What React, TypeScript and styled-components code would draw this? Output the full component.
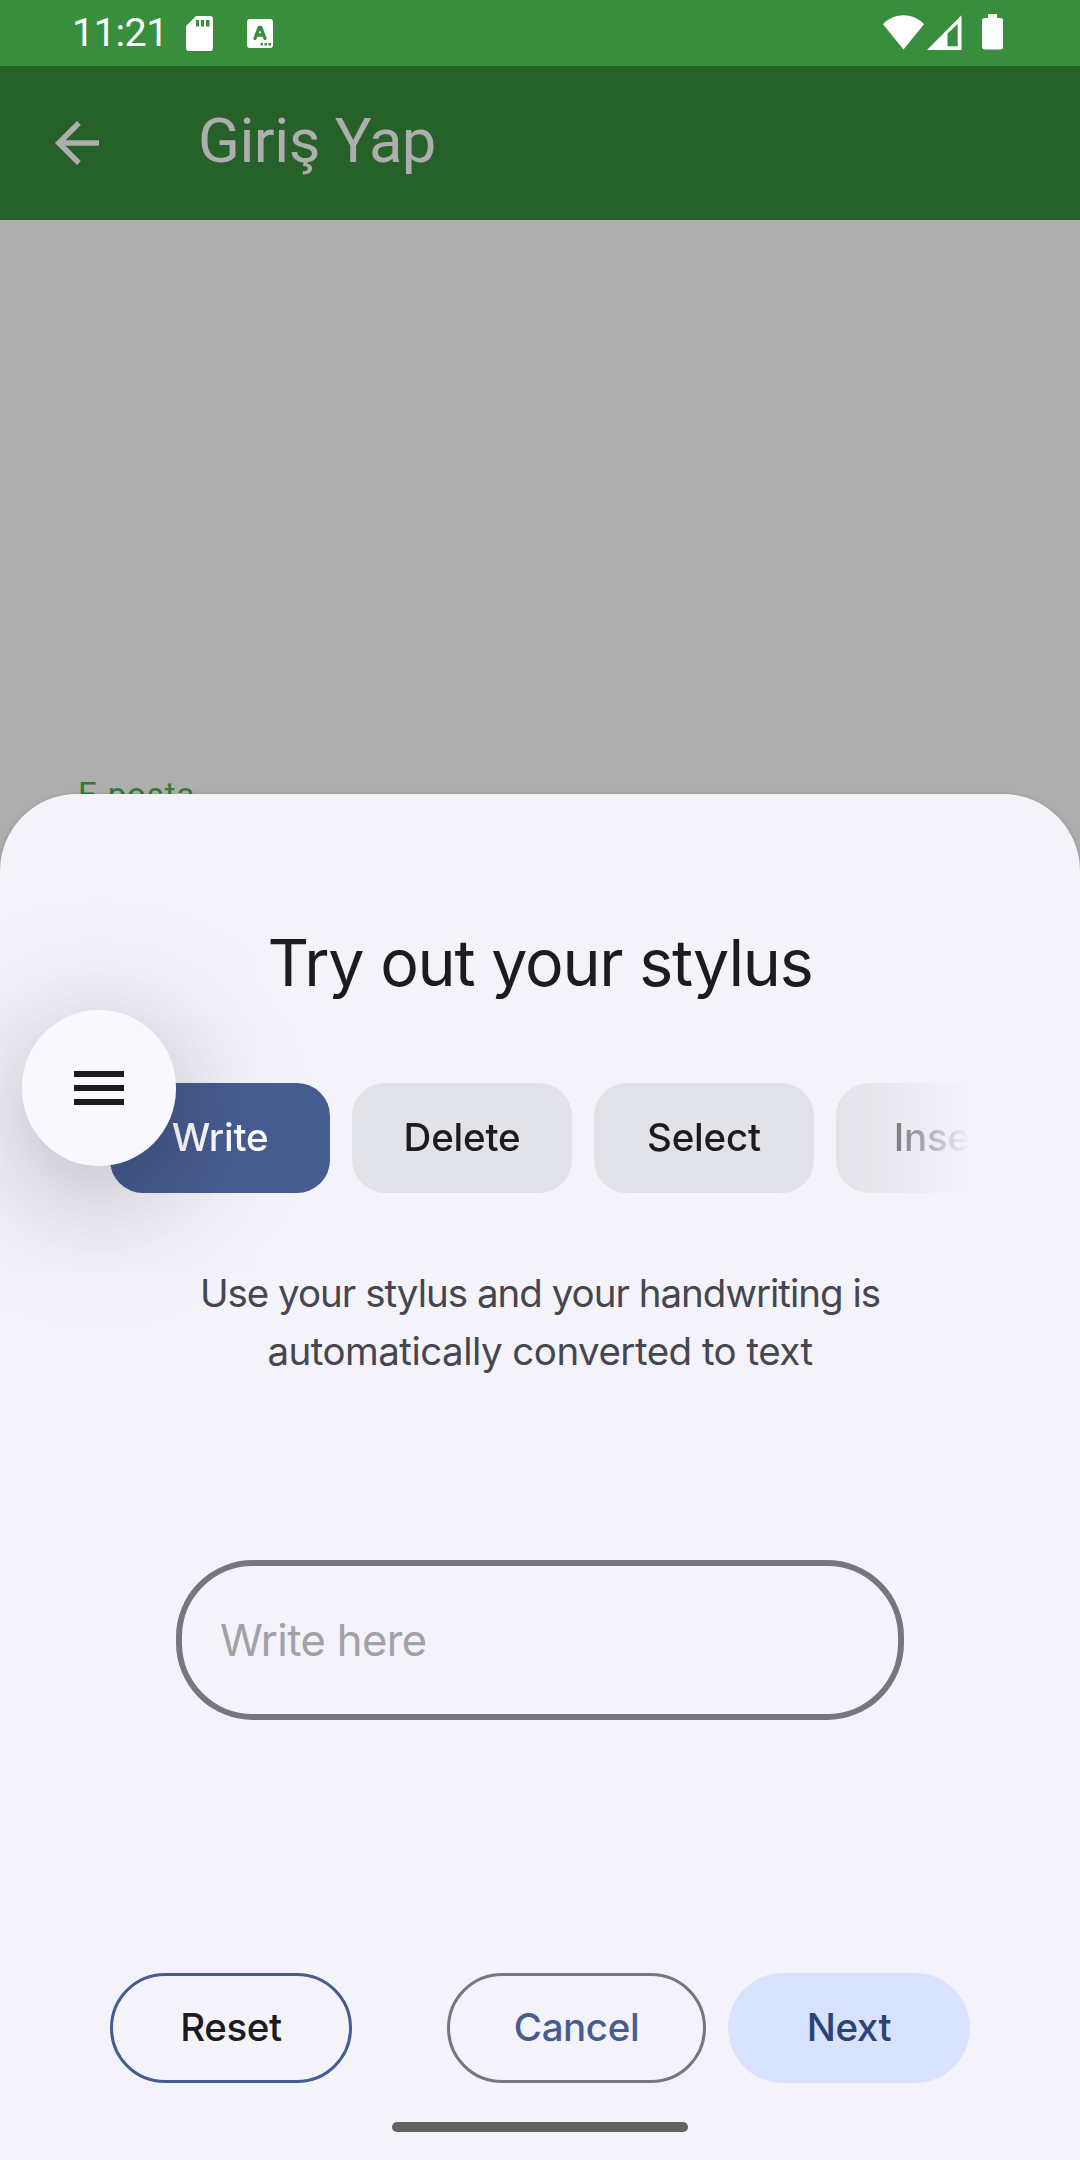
import React from 'react';
import styled, { createGlobalStyle } from 'styled-components';

const GlobalStyle = createGlobalStyle`
  * { box-sizing: border-box; }
  body { margin: 0; background: #aeaeae; }
  button, input { font: inherit; margin: 0; }
`;

const Screen = styled.main`
  position: relative;
  width: 1080px;
  height: 2160px;
  overflow: hidden;
  display: flex;
  flex-direction: column;
  background: #aeaeae;
  font-family: Inter, 'Liberation Sans', sans-serif;
`;

const StatusBar = styled.header`
  height: 66px;
  flex: none;
  display: flex;
  justify-content: space-between;
  padding: 0 77px 0 72px;
  background: #388e3c;
  color: #fff;
`;

const StatusGroup = styled.div`
  display: flex;
  align-items: flex-start;
`;

const Clock = styled.time`
  width: 114px;
  padding-top: 10px;
  font: 400 39.5px/46px Roboto, sans-serif;
  letter-spacing: -0.5px;
`;

const StatusIcon = styled.svg<{ $gap?: number }>`
  display: block;
  flex: none;
  margin-left: ${(p) => p.$gap ?? 0}px;
`;

const AppBar = styled.header`
  height: 154px;
  flex: none;
  display: flex;
  align-items: center;
  padding: 0 44px;
  background: #266129;
  color: #aeaeae;
`;

const AppTitle = styled.h1`
  margin: 0 0 4px 88px;
  font: 400 61.5px/72px Roboto, sans-serif;
  letter-spacing: -0.5px;
`;

const Content = styled.section`
  padding: 555px 0 0 78px;
`;

const FieldLabel = styled.label`
  display: block;
  font: 400 33px/40px Roboto, sans-serif;
  letter-spacing: 0.9px;
  color: #317c35;
`;

const Sheet = styled.section`
  position: absolute;
  left: 0;
  right: 0;
  bottom: 0;
  height: 1366px;
  display: flex;
  flex-direction: column;
  align-items: center;
  padding: 129px 110px 0;
  border-radius: 77px 77px 0 0;
  background: #f4f3fa;
  box-shadow: 0 1px 5px rgba(0, 0, 0, 0.2);
`;

const SheetTitle = styled.h2`
  margin: 0;
  font-weight: 400;
  font-size: 64.5px;
  line-height: 80px;
  letter-spacing: -1.25px;
  color: #1b1b20;
`;

const Chips = styled.nav`
  align-self: stretch;
  display: flex;
  gap: 22px;
  margin-top: 80px;
  overflow: hidden;
  mask-image: linear-gradient(to right, #000 calc(100% - 134px), transparent);
`;

const Chip = styled.button<{ $active?: boolean }>`
  flex: 0 0 220px;
  height: 110px;
  padding: 0 0 2px;
  border: 0;
  border-radius: 33px;
  background: ${(p) => (p.$active ? '#475d92' : '#e2e3e8')};
  color: ${(p) => (p.$active ? '#fff' : '#1b1b20')};
  font-weight: 500;
  font-size: 38.5px;
  letter-spacing: -0.2px;
`;

const Description = styled.p`
  margin: 71px 0 0;
  font-size: 38.5px;
  line-height: 58px;
  text-align: center;
  color: #45464f;
`;

const Line = styled.span<{ $tracking: number }>`
  display: block;
  letter-spacing: ${(p) => p.$tracking}px;
`;

const WritingField = styled.input`
  width: 728px;
  height: 160px;
  margin-top: 180px;
  padding: 0 38px;
  border: 6px solid #74777f;
  border-radius: 77px;
  outline: 0;
  background: transparent;
  font-size: 43.5px;
  letter-spacing: -0.6px;
  &::placeholder { color: #a2a1a7; opacity: 1; }
`;

const Actions = styled.footer`
  align-self: stretch;
  display: flex;
  gap: 22px;
  margin-top: 253px;
`;

const Action = styled.button<{ $width: number; $border?: string; $fill?: string; $ink: string }>`
  width: ${(p) => p.$width}px;
  height: 110px;
  padding: 0 0 2px;
  border: ${(p) => (p.$border ? `3px solid ${p.$border}` : '0')};
  border-radius: 55px;
  background: ${(p) => p.$fill ?? 'transparent'};
  color: ${(p) => p.$ink};
  font-weight: 500;
  font-size: 38.5px;
  letter-spacing: -0.4px;
  &:first-child { margin-right: auto; }
`;

const GestureHandle = styled.div`
  width: 296px;
  height: 10px;
  margin-top: 39px;
  border-radius: 5px;
  background: #626262;
`;

const MenuButton = styled.button`
  position: absolute;
  left: 22px;
  top: 1010px;
  width: 154px;
  height: 156px;
  display: flex;
  align-items: center;
  justify-content: center;
  padding: 0;
  border: 0;
  border-radius: 77px;
  background: #f9f8ff;
  box-shadow: 0 28px 160px rgba(0, 0, 0, 0.22), 0 24px 80px rgba(0, 0, 0, 0.11);
`;

const chips = ['Write', 'Delete', 'Select', 'Insert'];

export default function App() {
  return (
    <Screen>
      <GlobalStyle />
      <StatusBar>
        <StatusGroup>
          <Clock>11:21</Clock>
          <StatusIcon width="27" height="66" viewBox="0 0 27 66">
            <path fillRule="evenodd" fill="#fff" d="M10 16H24Q27 16 27 19V48Q27 51 24 51H3Q0 51 0 48V26ZM10 20V26.500H13V20ZM15 20V26.500H18V20ZM20 20V26.500H23.500V20Z" />
          </StatusIcon>
          <StatusIcon $gap={34} width="26" height="66" viewBox="0 0 26 66">
            <rect y="19" width="26" height="29" rx="3" fill="#fff" />
            <path d="M8 38.500L12.200 27.500H13.800L18 38.500M9.800 35H16.200" fill="none" stroke="#388e3c" strokeWidth="3.400" strokeLinecap="round" strokeLinejoin="round" />
            <path d="M13.500 43H16V45.500H13.500ZM17.500 43H20V45.500H17.500ZM21.500 43H24V45.500H21.500Z" fill="#388e3c" />
          </StatusIcon>
        </StatusGroup>
        <StatusGroup>
          <StatusIcon width="41" height="66" viewBox="0 0 41 66">
            <path d="M0 24.200C11 12.300 30 12.300 41 24.200L20.500 49.500Z" fill="#fff" />
          </StatusIcon>
          <StatusIcon $gap={3.500} width="35" height="66" viewBox="0 0 35 66">
            <path fillRule="evenodd" fill="#fff" d="M0 50L34.500 15.300V50ZM20.500 33.500V46.200H30.700V24Z" />
          </StatusIcon>
          <StatusIcon $gap={20} width="21" height="66" viewBox="0 0 21 66">
            <path d="M6 14H15V18H18.500Q21 18 21 20.500V47Q21 49.500 18.500 49.500H2.500Q0 49.500 0 47V20.500Q0 18 2.500 18H6Z" fill="#fff" />
          </StatusIcon>
        </StatusGroup>
      </StatusBar>
      <AppBar>
        <svg width="66" height="66" viewBox="0 0 24 24">
          <path fill="currentColor" d="M20 11H7.830l5.590-5.590L12 4l-8 8 8 8 1.410-1.410L7.830 13H20z" />
        </svg>
        <AppTitle>Giriş Yap</AppTitle>
      </AppBar>
      <Content>
        <FieldLabel>E-posta</FieldLabel>
      </Content>
      <Sheet>
        <SheetTitle>Try out your stylus</SheetTitle>
        <Chips>
          {chips.map((name, i) => (
            <Chip key={name} $active={i === 0}>{name}</Chip>
          ))}
        </Chips>
        <Description>
          <Line $tracking={-1}>Use your stylus and your handwriting is</Line>
          <Line $tracking={-0.52}>automatically converted to text</Line>
        </Description>
        <WritingField placeholder="Write here" />
        <Actions>
          <Action $width={242} $border="#475d92" $ink="#1b1b20">Reset</Action>
          <Action $width={259} $border="#74777f" $ink="#475d92">Cancel</Action>
          <Action $width={242} $fill="#d9e2ff" $ink="#2c4378">Next</Action>
        </Actions>
        <GestureHandle />
      </Sheet>
      <MenuButton aria-label="Menu">
        <svg width="50" height="34" viewBox="0 0 50 34">
          <path d="M0 0H50V6H0ZM0 14H50V20H0ZM0 28H50V34H0Z" fill="#1b1b20" />
        </svg>
      </MenuButton>
    </Screen>
  );
}
